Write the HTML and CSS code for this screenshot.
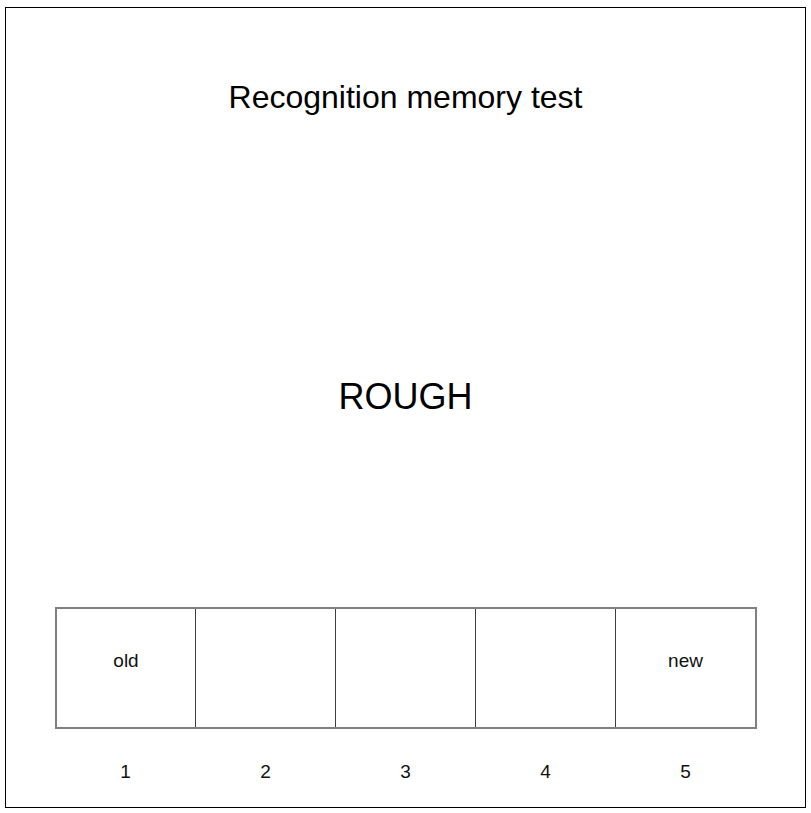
FILE: index.html
```html
<!DOCTYPE html>
<html lang="en">
<head>
    <meta charset="UTF-8">
    <meta name="viewport" content="width=device-width, initial-scale=1.0">
    <title>Recognition memory test</title>
    <link rel="stylesheet" href="styles.css">
</head>
<body>

    <div class="page">
        <h1 class="title">Recognition memory test</h1>

        <div class="word">ROUGH</div>

        <div class="scale">
            <div class="cell">old</div>
            <div class="cell"></div>
            <div class="cell"></div>
            <div class="cell"></div>
            <div class="cell">new</div>
        </div>

        <div class="numbers">
            <span>1</span>
            <span>2</span>
            <span>3</span>
            <span>4</span>
            <span>5</span>
        </div>
    </div>

</body>
</html>
```

FILE: styles.css
```css
body {
    font-family: 'Liberation Sans', Arial, sans-serif;
    background-color: #ffffff;
    color: #000;
    margin: 0;
    padding: 7px 0 0 5px;
}
.page {
    box-sizing: border-box;
    width: 801px;
    height: 801px;
    border: 1px solid #000;
    display: flex;
    flex-direction: column;
    align-items: center;
}
.title {
    font-size: 32px;
    font-weight: normal;
    line-height: 36px;
    margin: 71px 0 0 0;
}
.word {
    font-size: 36px;
    line-height: 40px;
    margin-top: 262px;
}
.scale {
    box-sizing: border-box;
    width: 702px;
    height: 122px;
    margin-top: 190px;
    margin-left: 1px;
    border: 2px solid #808080;
    display: grid;
    grid-template-columns: 138px 140px 140px 140px 140px;
}
.cell {
    border-left: 1px solid #3f3f3f;
    font-size: 19px;
    line-height: 22px;
    padding-top: 41px;
    text-align: center;
    color: #111;
}
.cell:first-child {
    border-left: none;
}
.numbers {
    width: 700px;
    margin-top: 32px;
    display: grid;
    grid-template-columns: repeat(5, 1fr);
    font-size: 19px;
    line-height: 22px;
    text-align: center;
    color: #111;
}
```
